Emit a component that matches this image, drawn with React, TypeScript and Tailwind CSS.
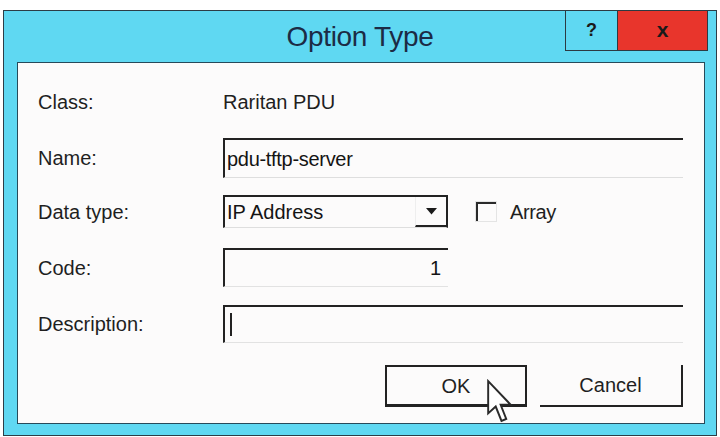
import React from "react";

const font = { fontFamily: '"Liberation Sans", Arial, sans-serif' };

function Cursor() {
  return (
    <svg width="28" height="46" viewBox="0 0 13 21.4" className="absolute left-[99px] top-[12px]">
      <path
        d="M1 1 L1 16 L4.5 12.8 L7.2 19.5 L9.4 18.6 L6.8 12 L11.5 12 Z"
        fill="#ffffff"
        stroke="#2a2a2a"
        strokeWidth="0.9"
        strokeLinejoin="miter"
      />
    </svg>
  );
}

export default function App() {
  return (
    <div className="w-[720px] h-[437px] bg-white pt-[10px] pl-[3px]" style={font}>
      <div className="w-[714px] h-[426px] border border-[#2c3d47] bg-[#5fd8f2] flex flex-col">
        {/* Title bar */}
        <div className="h-[51px] grid grid-cols-[1fr_auto_1fr]">
          <div />
          <div className="flex items-center justify-center pt-[1px] text-[28px] text-[#1c2b45] tracking-[-0.3px]">
            Option Type
          </div>
          <div className="flex justify-end pr-[8px] -mt-px">
            <div className="w-[53px] h-[41px] border border-[#2c3a42] bg-[#5fd8f2] flex items-center justify-center text-[18px] font-bold text-[#1a1a1a]">
              ?
            </div>
            <div className="w-[90px] h-[41px] border border-l-0 border-[#2c3a42] bg-[#e8352c] flex items-center justify-center text-[21px] font-bold text-[#1a1a1a] pb-[2px]">
              x
            </div>
          </div>
        </div>

        {/* Panel */}
        <div className="ml-[13px] w-[688px] h-[362px] border border-[#274a5a] bg-[#fcfbfb] pt-[24px] pl-[20px] text-[20px] text-[#1f1f1f]">
          <div className="flex items-center h-[30px]">
            <div className="w-[185px]">Class:</div>
            <div>Raritan PDU</div>
          </div>

          <div className="flex items-center mt-[21px]">
            <div className="w-[185px]">Name:</div>
            <div className="w-[460px] h-[40px] border-t-2 border-l-2 border-[#222] border-b border-b-[#dedede] flex items-center pl-[2px] text-[#141414] tracking-[-0.3px]">
              pdu-tftp-server
            </div>
          </div>

          <div className="flex items-center mt-[17px]">
            <div className="w-[185px]">Data type:</div>
            <div className="w-[225px] h-[33px] border-t-2 border-l-2 border-r-2 border-[#222] border-b border-b-[#dedede] flex items-stretch">
              <div className="flex-1 flex items-center pl-[2px] text-[#141414]">IP Address</div>
              <div className="w-[31px] border-b-2 border-[#222] border-l border-l-[#eeeeee] flex items-center justify-center">
                <svg width="11" height="7" viewBox="0 0 11 7">
                  <path d="M0 0 L11 0 L5.5 6.5 Z" fill="#1a1a1a" />
                </svg>
              </div>
            </div>
            <div className="ml-[27px] w-[22px] h-[21px] border border-[#e4e4e4] shadow-[inset_2px_2px_0_#2a2a2a]" />
            <div className="ml-[13px] tracking-[-0.4px]">Array</div>
          </div>

          <div className="flex items-center mt-[20px]">
            <div className="w-[185px]">Code:</div>
            <div className="w-[225px] h-[39px] border-t-2 border-l-2 border-[#222] border-b border-b-[#e2e2e2] flex items-center justify-end pr-[7px] text-[#141414]">
              1
            </div>
          </div>

          <div className="flex items-center mt-[18px]">
            <div className="w-[185px]">Description:</div>
            <div className="w-[460px] h-[38px] border-t-2 border-l-2 border-[#222] border-b border-b-[#e2e2e2] flex items-center pl-[5px]">
              <div className="w-[2px] h-[23px] bg-[#222]" />
            </div>
          </div>

          <div className="flex mt-[22px] pl-[347px] gap-[13px]">
            <div className="relative w-[142px] h-[42px] border-2 border-b-[3px] border-[#222] flex items-center justify-center">
              OK
              <Cursor />
            </div>
            <div className="w-[143px] h-[42px] border-r-2 border-b-2 border-[#222] flex items-center justify-center">
              Cancel
            </div>
          </div>
        </div>
      </div>
    </div>
  );
}
